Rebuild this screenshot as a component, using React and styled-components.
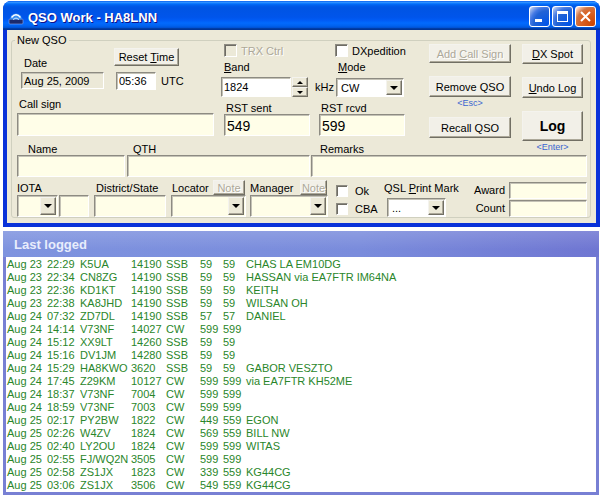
import styled, { createGlobalStyle } from 'styled-components'

const GlobalStyle = createGlobalStyle`
  body {
    margin: 0;
    background: #fff;
    font-family: 'Liberation Sans', Arial, sans-serif;
    font-size: 11px;
    color: #000;
  }
`

const LOG = [
  ['Aug 23', '22:29', 'K5UA', '14190', 'SSB', '59', '59', 'CHAS LA EM10DG'],
  ['Aug 23', '22:34', 'CN8ZG', '14190', 'SSB', '59', '59', 'HASSAN via EA7FTR IM64NA'],
  ['Aug 23', '22:36', 'KD1KT', '14190', 'SSB', '59', '59', 'KEITH'],
  ['Aug 23', '22:38', 'KA8JHD', '14190', 'SSB', '59', '59', 'WILSAN OH'],
  ['Aug 24', '07:32', 'ZD7DL', '14190', 'SSB', '57', '57', 'DANIEL'],
  ['Aug 24', '14:14', 'V73NF', '14027', 'CW', '599', '599', ''],
  ['Aug 24', '15:12', 'XX9LT', '14260', 'SSB', '59', '59', ''],
  ['Aug 24', '15:16', 'DV1JM', '14280', 'SSB', '59', '59', ''],
  ['Aug 24', '15:29', 'HA8KWO', '3620', 'SSB', '59', '59', 'GABOR VESZTO'],
  ['Aug 24', '17:45', 'Z29KM', '10127', 'CW', '599', '599', 'via EA7FTR KH52ME'],
  ['Aug 24', '18:37', 'V73NF', '7004', 'CW', '599', '599', ''],
  ['Aug 24', '18:59', 'V73NF', '7003', 'CW', '599', '599', ''],
  ['Aug 25', '02:17', 'PY2BW', '1822', 'CW', '449', '559', 'EGON'],
  ['Aug 25', '02:26', 'W4ZV', '1824', 'CW', '569', '559', 'BILL NW'],
  ['Aug 25', '02:40', 'LY2OU', '1824', 'CW', '599', '599', 'WITAS'],
  ['Aug 25', '02:55', 'FJ/WQ2N', '3505', 'CW', '599', '599', ''],
  ['Aug 25', '02:58', 'ZS1JX', '1823', 'CW', '339', '559', 'KG44CG'],
  ['Aug 25', '03:06', 'ZS1JX', '3506', 'CW', '549', '559', 'KG44CG'],
]

const AppIcon = () => (
  <svg width="16" height="16" viewBox="0 0 16 16">
    <rect x="1" y="10" width="14" height="5" rx="1" fill="#1b2a6e" stroke="#8fa8f0" strokeWidth="0.6" />
    <path d="M2 10.5 A6 6 0 0 1 14 10.5 Z" fill="#3b8ef0" />
    <path d="M3.5 8.5 Q8 3 12.5 8.5" stroke="#fff" strokeWidth="1.4" fill="none" />
    <path d="M5 10.5 Q8 7.5 11 10.5" stroke="#c8e6ff" strokeWidth="1" fill="none" />
  </svg>
)

const App = () => {
  return (
    <>
      <GlobalStyle />
      <Window>
        <TitleBar>
          <AppIcon />
          <TitleText>QSO Work - HA8LNN</TitleText>
          <TitleButtons>
            <TitleButton>
              <svg width="19" height="19" viewBox="0 0 19 19">
                <rect x="5" y="12" width="7" height="3" fill="#fff" />
              </svg>
            </TitleButton>
            <TitleButton>
              <svg width="19" height="19" viewBox="0 0 19 19">
                <rect x="4.5" y="4.5" width="10" height="10" fill="none" stroke="#fff" strokeWidth="1" />
                <rect x="4" y="4" width="11" height="3" fill="#fff" />
              </svg>
            </TitleButton>
            <TitleButton $close>
              <svg width="19" height="19" viewBox="0 0 19 19">
                <path d="M5 5 L14 14 M14 5 L5 14" stroke="#fff" strokeWidth="2" />
              </svg>
            </TitleButton>
          </TitleButtons>
        </TitleBar>

        <Body>
          <GroupBox>
            <Legend>New QSO</Legend>

            <Upper>
              <ColA>
                <DateRow>
                  <DateCol>
                    <Label $mt={13} $ml={3}>Date</Label>
                    <Field $w={83} $h={17} $bg="#ece9d8" $mt={2} value="Aug 25, 2009" />
                  </DateCol>
                  <TimeCol>
                    <Button $w={65} $h={18} style={{ marginTop: 4 }}>
                      Reset <u>T</u>ime
                    </Button>
                    <Inline $mt={6} $ml={2}>
                      <Field $w={40} $h={18} $bg="#fff" value="05:36" />
                      <Unit $ml={5}>UTC</Unit>
                    </Inline>
                  </TimeCol>
                </DateRow>
                <Label $mt={8} $ml={2}>Call sign</Label>
                <Field $w={197} $h={23} $mt={2} value="" />
              </ColA>

              <ColB>
                <Check $ml={3}>
                  <Box $disabled />
                  <CheckText $disabled>TRX Ctrl</CheckText>
                </Check>
                <Label $mt={4} $ml={3}>
                  <u>B</u>and
                </Label>
                <Inline $mt={3}>
                  <Field $w={70} $h={20} $bg="#fff" value="1824" />
                  <Spin>
                    <SpinBtn $up />
                    <SpinBtn />
                  </Spin>
                  <Unit $ml={7}>kHz</Unit>
                </Inline>
                <Label $mt={5} $ml={5} $lh={12}>RST sent</Label>
                <Field $w={86} $h={22} $ml={3} $big value="549" />
              </ColB>

              <ColC>
                <Check $ml={16}>
                  <Box />
                  <CheckText>DXpedition</CheckText>
                </Check>
                <Label $mt={4} $ml={19}>
                  <u>M</u>ode
                </Label>
                <Select $w={68} $h={19} $bg="#fff" $mt={4} $ml={17}>
                  <SelectText>CW</SelectText>
                  <DropBtn />
                </Select>
                <Label $mt={5} $ml={2} $lh={12}>RST rcvd</Label>
                <Field $w={86} $h={22} $big value="599" />
              </ColC>

              <Buttons>
                <BtnCol>
                  <Button $w={82} $h={19} disabled>
                    Add <u>C</u>all Sign
                  </Button>
                  <Button $w={82} $h={21} style={{ marginTop: 13 }}>
                    Remove QSO
                  </Button>
                  <Hint>&lt;Esc&gt;</Hint>
                  <Button $w={82} $h={21} style={{ marginTop: 9 }}>
                    Recall QSO
                  </Button>
                </BtnCol>
                <BtnCol>
                  <Button $w={61} $h={20}>
                    <u>D</u>X Spot
                  </Button>
                  <Button $w={61} $h={21} style={{ marginTop: 13 }}>
                    <u>U</u>ndo Log
                  </Button>
                  <Button $w={61} $h={30} $big style={{ marginTop: 13 }}>
                    Log
                  </Button>
                  <Hint>&lt;Enter&gt;</Hint>
                </BtnCol>
              </Buttons>
            </Upper>

            <Middle>
              <Label $lh={12} $ml={11}>Name</Label>
              <Label $lh={12} $ml={6}>QTH</Label>
              <Label $lh={12} $ml={9}>Remarks</Label>
              <Field $w={108} $h={22} value="" />
              <Field $w={183} $h={22} value="" />
              <Field $w={276} $h={22} value="" />
            </Middle>

            <Bottom>
              <Group $w={72}>
                <GroupHead>
                  <span>IOTA</span>
                </GroupHead>
                <Inline>
                  <Select $w={41} $h={22}>
                    <SelectText />
                    <DropBtn />
                  </Select>
                  <Field $w={30} $h={22} $ml={1} value="" />
                </Inline>
              </Group>

              <Group $w={72} $ml={5}>
                <GroupHead $pl={2}>
                  <span>District/State</span>
                </GroupHead>
                <Field $w={72} $h={22} value="" />
              </Group>

              <Group $w={75} $ml={5}>
                <GroupHead $pl={1}>
                  <span>Locator</span>
                  <Button $w={32} $h={15} disabled style={{ marginRight: 1 }}>
                    Note
                  </Button>
                </GroupHead>
                <Select $w={75} $h={22}>
                  <SelectText />
                  <DropBtn />
                </Select>
              </Group>

              <Group $w={78} $ml={4}>
                <GroupHead>
                  <span>Manager</span>
                  <Button $w={27} $h={15} disabled style={{ marginRight: 1 }}>
                    Note
                  </Button>
                </GroupHead>
                <Select $w={78} $h={22}>
                  <SelectText />
                  <DropBtn />
                </Select>
              </Group>

              <Checks>
                <Check>
                  <Box $size={12} />
                  <CheckText $gap={7}>Ok</CheckText>
                </Check>
                <Check>
                  <Box $size={12} />
                  <CheckText $gap={7}>CBA</CheckText>
                </Check>
              </Checks>

              <Group $w={80}>
                <GroupHead>
                  <span>
                    QSL <u>P</u>rint Mark
                  </span>
                </GroupHead>
                <Select $w={59} $h={19} $bg="#fff" $mt={3} $ml={3}>
                  <SelectText>...</SelectText>
                  <DropBtn />
                </Select>
              </Group>

              <Award>
                <AwardLabel>Award</AwardLabel>
                <Field $w={78} $h={17} value="" />
                <AwardLabel>Count</AwardLabel>
                <Field $w={78} $h={17} value="" />
              </Award>
            </Bottom>
          </GroupBox>
        </Body>
      </Window>

      <Panel>
        <PanelHead>Last logged</PanelHead>
        <List>
          {LOG.map((r, i) => (
            <Row key={i}>
              {r.map((c, j) => (
                <span key={j}>{c}</span>
              ))}
            </Row>
          ))}
        </List>
      </Panel>
    </>
  )
}
export default App

const Window = styled.div`
  width: 597px;
  margin: 1px 0 0 3px;
  background: #0831d9;
  border-radius: 8px 8px 0 0;
  overflow: hidden;
  padding-bottom: 4px;
`
const TitleBar = styled.div`
  box-sizing: border-box;
  height: 29px;
  padding: 2px 4px 0 5px;
  display: flex;
  align-items: center;
  background: linear-gradient(
    180deg,
    #0058ee 0%,
    #3593ff 4%,
    #288eff 6%,
    #127dff 8%,
    #036ffc 10%,
    #0262ee 14%,
    #0057e5 20%,
    #0054e3 24%,
    #0055eb 56%,
    #005bf5 66%,
    #026afe 76%,
    #0062ef 86%,
    #0052d6 92%,
    #0040ab 94%,
    #003092 100%
  );
`
const TitleText = styled.span`
  margin-left: 4px;
  padding-top: 1px;
  color: #fff;
  font: bold 13px 'Liberation Sans', Arial, sans-serif;
  text-shadow: 1px 1px #0f1089;
`
const TitleButtons = styled.div`
  margin-left: auto;
  display: flex;
  gap: 2px;
`
const TitleButton = styled.div`
  box-sizing: border-box;
  width: 21px;
  height: 21px;
  border: 1px solid #fff;
  border-radius: 3px;
  display: flex;
  align-items: center;
  justify-content: center;
  background: ${(p) =>
    p.$close
      ? 'radial-gradient(circle at 90% 90%, #cc4600 0%, #dc6527 55%, #cd7546 70%, #ffccb2 90%, #fff 100%)'
      : 'radial-gradient(circle at 90% 90%, #0054e9 0%, #2263d5 55%, #4479e4 70%, #a3bbec 90%, #fff 100%)'};
`
const Body = styled.div`
  box-sizing: border-box;
  height: 193px;
  margin: 0 4px;
  padding: 10px 5px 0 4px;
  background: #ece9d8;
`
const GroupBox = styled.div`
  position: relative;
  box-sizing: border-box;
  height: 178px;
  padding: 3px 3px 0 5px;
  border: 1px solid #d0d0bf;
  border-radius: 3px;
`
const Legend = styled.span`
  position: absolute;
  top: -8px;
  left: 3px;
  padding: 0 2px;
  line-height: 14px;
  background: #ece9d8;
`
const Upper = styled.div`
  display: flex;
  height: 99px;
`
const Col = styled.div`
  display: flex;
  flex-direction: column;
  align-items: flex-start;
  flex-shrink: 0;
`
const ColA = styled(Col)`
  width: 197px;
`
const ColB = styled(Col)`
  width: 98px;
  margin-left: 7px;
`
const ColC = styled(Col)`
  width: 86px;
`
const DateRow = styled.div`
  display: flex;
  height: 46px;
`
const DateCol = styled(Col)`
  width: 83px;
  margin-left: 4px;
`
const TimeCol = styled(Col)`
  margin-left: 10px;
`
const Label = styled.div`
  line-height: ${(p) => p.$lh || 13}px;
  margin-top: ${(p) => p.$mt || 0}px;
  margin-left: ${(p) => p.$ml || 0}px;
  white-space: nowrap;
`
const Inline = styled.div`
  display: flex;
  align-items: center;
  flex-shrink: 0;
  margin-top: ${(p) => p.$mt || 0}px;
  margin-left: ${(p) => p.$ml || 0}px;
`
const Unit = styled.span`
  margin-left: ${(p) => p.$ml || 0}px;
  white-space: nowrap;
`
const sunken = `
  box-sizing: border-box;
  border: 1px solid;
  border-color: #8d8b82 #fff #fff #8d8b82;
  box-shadow: inset 1px 1px #c4c2b6;
`
const Field = styled.input.attrs({ readOnly: true })`
  ${sunken}
  flex-shrink: 0;
  width: ${(p) => p.$w}px;
  height: ${(p) => p.$h}px;
  margin: ${(p) => p.$mt || 0}px 0 0 ${(p) => p.$ml || 0}px;
  padding: ${(p) => (p.$big ? '1px 0 0 2px' : '0 2px')};
  background: ${(p) => p.$bg || '#fffee8'};
  font-family: 'Liberation Sans', Arial, sans-serif;
  font-size: ${(p) => (p.$big ? 14 : 11)}px;
  color: #000;
  outline: none;
`
const Select = styled.div`
  ${sunken}
  display: flex;
  flex-shrink: 0;
  width: ${(p) => p.$w}px;
  height: ${(p) => p.$h}px;
  margin: ${(p) => p.$mt || 0}px 0 0 ${(p) => p.$ml || 0}px;
  padding: 1px;
  background: ${(p) => p.$bg || '#fffee8'};
`
const SelectText = styled.span`
  flex: 1;
  padding-left: 3px;
  display: flex;
  align-items: center;
`
const raised = `
  box-sizing: border-box;
  border: 1px solid;
  border-color: #f4f3ee #716f64 #716f64 #f4f3ee;
  box-shadow: inset -1px -1px #aca899;
  background: #ece9d8;
`
const DropBtn = styled.span`
  ${raised}
  width: 16px;
  display: flex;
  align-items: center;
  justify-content: center;
  &::after {
    content: '';
    border-left: 4px solid transparent;
    border-right: 4px solid transparent;
    border-top: 4px solid #000;
  }
`
const Spin = styled.div`
  display: flex;
  flex-direction: column;
  width: 16px;
  height: 20px;
  margin-left: 1px;
`
const SpinBtn = styled.span`
  ${raised}
  flex: 1;
  display: flex;
  align-items: center;
  justify-content: center;
  &::after {
    content: '';
    border-left: 3px solid transparent;
    border-right: 3px solid transparent;
    ${(p) => (p.$up ? 'border-bottom: 3px solid #000;' : 'border-top: 3px solid #000;')}
  }
`
const Button = styled.button`
  ${raised}
  flex-shrink: 0;
  width: ${(p) => p.$w}px;
  height: ${(p) => p.$h}px;
  margin: 0;
  padding: 0;
  background: #f2f0e8;
  font-family: 'Liberation Sans', Arial, sans-serif;
  font-size: ${(p) => (p.$big ? 14 : 11)}px;
  font-weight: ${(p) => (p.$big ? 'bold' : 'normal')};
  color: ${(p) => (p.disabled ? '#aca899' : '#000')};
  text-shadow: ${(p) => (p.disabled ? '1px 1px #fff' : 'none')};
  white-space: nowrap;
`
const Check = styled.div`
  display: flex;
  align-items: center;
  margin-left: ${(p) => p.$ml || 0}px;
  height: 13px;
`
const Box = styled.span`
  box-sizing: border-box;
  flex-shrink: 0;
  width: ${(p) => p.$size || 13}px;
  height: ${(p) => p.$size || 13}px;
  border: 1px solid;
  border-color: #8d8b82 #fff #fff #8d8b82;
  box-shadow: inset 1px 1px #6e6c64;
  background: ${(p) => (p.$disabled ? '#ece9d8' : '#fff')};
`
const CheckText = styled.span`
  margin-left: ${(p) => p.$gap || 4}px;
  white-space: nowrap;
  color: ${(p) => (p.$disabled ? '#aca899' : '#000')};
  text-shadow: ${(p) => (p.$disabled ? '1px 1px #fff' : 'none')};
`
const Buttons = styled.div`
  display: flex;
  gap: 11px;
  margin-left: 24px;
`
const BtnCol = styled(Col)`
  align-items: center;
`
const Hint = styled.div`
  font-size: 9px;
  line-height: 10px;
  color: #3a66d0;
  margin-top: 1px;
`
const Middle = styled.div`
  display: grid;
  grid-template-columns: 110px 184px 276px;
`
const Bottom = styled.div`
  display: flex;
  margin-top: 3px;
`
const Group = styled.div`
  display: flex;
  flex-direction: column;
  flex-shrink: 0;
  width: ${(p) => p.$w}px;
  margin-left: ${(p) => p.$ml || 0}px;
`
const GroupHead = styled.div`
  display: flex;
  align-items: center;
  justify-content: space-between;
  height: 15px;
  padding-left: ${(p) => p.$pl || 0}px;
  white-space: nowrap;
`
const Checks = styled.div`
  display: flex;
  flex-direction: column;
  gap: 5px;
  width: 48px;
  margin-left: 8px;
  padding-top: 4px;
`
const Award = styled.div`
  margin-left: auto;
  margin-top: 2px;
  display: grid;
  grid-template-columns: auto 78px;
  grid-auto-rows: 17px;
  row-gap: 1px;
  column-gap: 4px;
`
const AwardLabel = styled.span`
  text-align: right;
  line-height: 17px;
`
const Panel = styled.div`
  width: 596px;
  height: 264px;
  margin: 4px 0 0 3px;
  display: flex;
  flex-direction: column;
`
const PanelHead = styled.div`
  height: 26px;
  flex-shrink: 0;
  padding-left: 11px;
  display: flex;
  align-items: center;
  color: #e8edfc;
  font: bold 13px 'Liberation Sans', Arial, sans-serif;
  background: linear-gradient(180deg, rgba(255, 255, 255, 0.14), rgba(255, 255, 255, 0) 70%),
    linear-gradient(90deg, #7e93df 0%, #7a8cdc 60%, #6f76d2 100%);
`
const List = styled.div`
  flex: 1;
  background: #fff;
  padding: 1px 0 0 1px;
  border: 3px solid #7880d4;
  border-top: 0;
`
const Row = styled.div`
  display: grid;
  grid-template-columns: 40px 33px 51px 35px 34px 23px 23px auto;
  height: 13px;
  line-height: 13px;
  color: #2a862a;
  white-space: nowrap;
`
